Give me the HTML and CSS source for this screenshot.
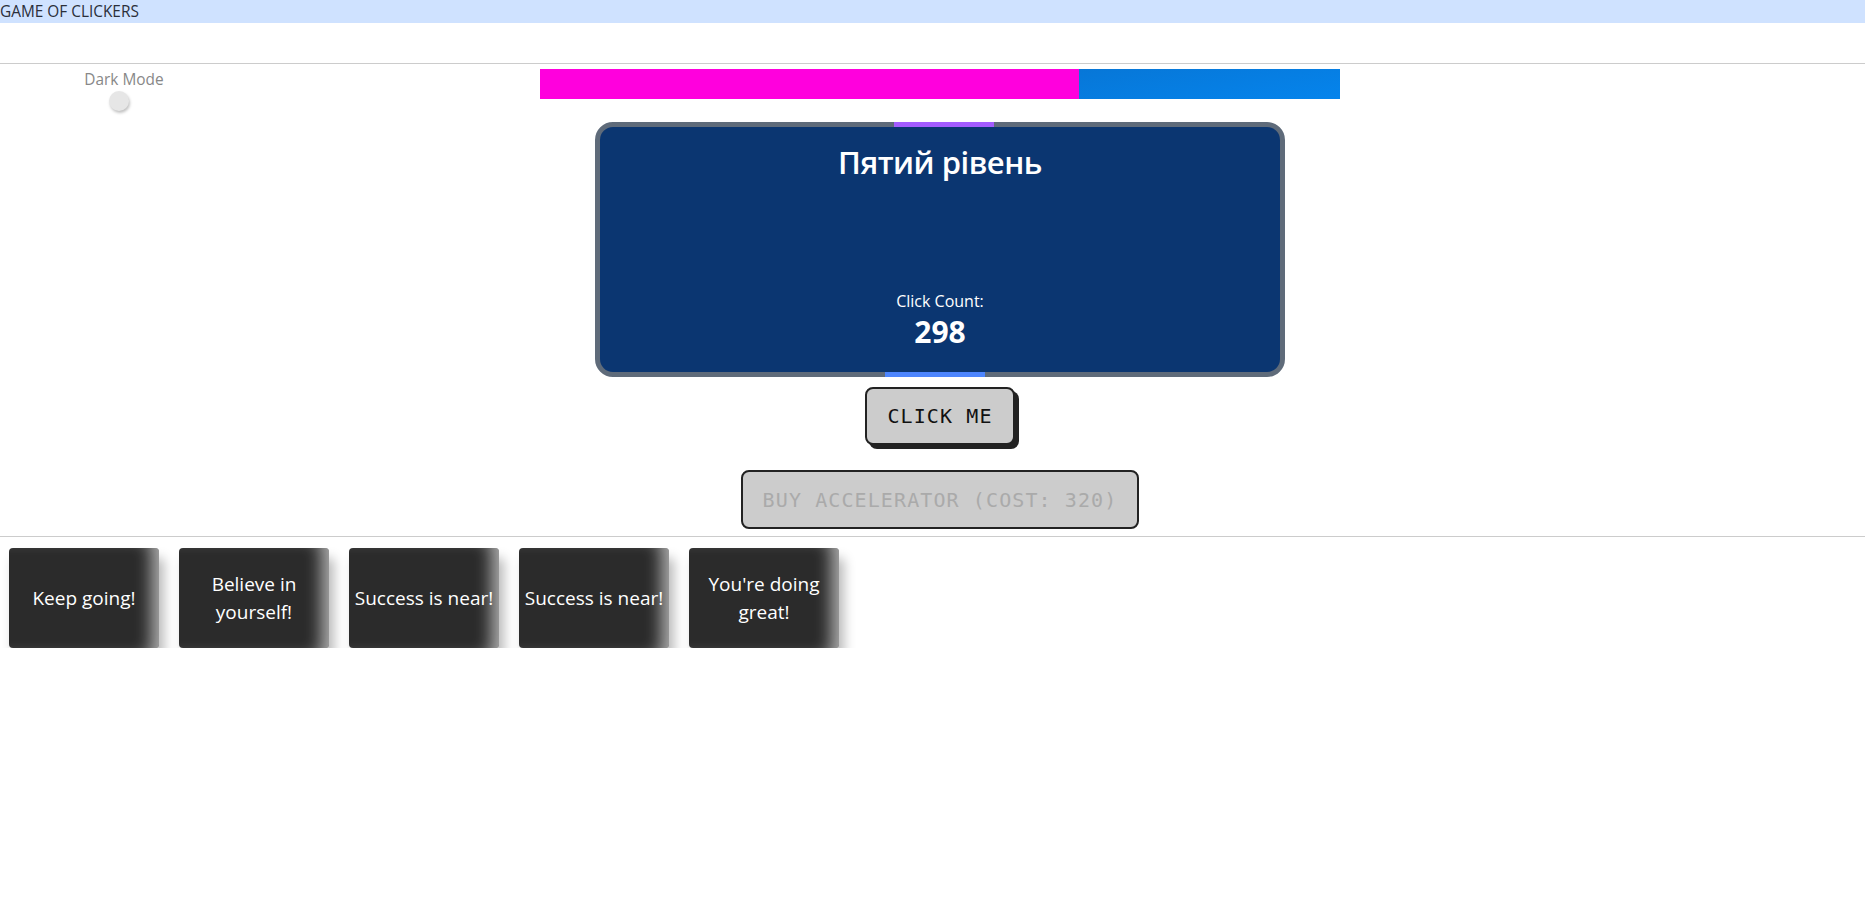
FILE: index.html
```html
<!DOCTYPE html>
<html lang="uk">
<head>
<meta charset="utf-8">
<title>Game of Clickers</title>
<link rel="stylesheet" href="styles.css">
</head>
<body>
<div class="topbar">GAME OF CLICKERS</div>
<div class="nav"></div>
<div class="layout">
  <aside class="side">
    <div class="dm-label">Dark Mode</div>
    <div class="switch"><span class="knob"></span></div>
  </aside>
  <main class="game">
    <div class="progress"><div class="progress-fill" style="width:67.4%"></div></div>
    <section class="level">
      <span class="accent accent-top"></span>
      <span class="accent accent-bottom"></span>
      <h2 class="level-title">Пятий рівень</h2>
      <div class="counter">
        <div class="counter-label">Click Count:</div>
        <div class="counter-value">298</div>
      </div>
    </section>
    <button class="btn btn-click">CLICK ME</button>
    <button class="btn btn-buy" disabled>BUY ACCELERATOR (COST: 320)</button>
  </main>
</div>
<div class="divider"></div>
<div class="cards">
  <div class="card">Keep going!</div>
  <div class="card">Believe in yourself!</div>
  <div class="card">Success is near!</div>
  <div class="card">Success is near!</div>
  <div class="card">You're doing great!</div>
</div>
</body>
</html>
```
FILE: styles.css
```css
* { box-sizing: border-box; }
body {
  margin: 0;
  font-family: "Segoe UI", "Open Sans", "Noto Sans", sans-serif;
  background: #fff;
}
.topbar {
  height: 23px;
  background: #cfe2ff;
  color: #2b2f3a;
  font-size: 15.4px;
  line-height: 23px;
}
.nav {
  height: 41px;
  border-bottom: 1px solid #cccccc;
}
.layout {
  display: flex;
  align-items: flex-start;
  padding-top: 6px;
}
.side {
  width: 248px;
  display: flex;
  flex-direction: column;
  align-items: center;
}
.dm-label {
  font-size: 15.4px;
  line-height: 20px;
  color: #888;
}
.switch {
  width: 30px;
  height: 20px;
  margin-top: 1px;
}
.knob {
  display: block;
  width: 20px;
  height: 20px;
  border-radius: 50%;
  background: #e6e6e6;
  box-shadow: 1px 2px 3px rgba(0,0,0,0.25);
}
.game {
  width: 800px;
  margin-left: 292px;
  margin-top: -1px;
  display: flex;
  flex-direction: column;
  align-items: center;
}
.progress {
  width: 800px;
  height: 30px;
  background: linear-gradient(170deg, #0a66bd 0%, #0584ec 100%);
}
.progress-fill {
  height: 100%;
  background: #ff00dd;
}
.level {
  position: relative;
  margin-top: 23px;
  width: 690px;
  height: 255px;
  background: #0b3671;
  border: 5px solid #5f6b7a;
  border-radius: 18px;
  color: #fff;
  display: flex;
  flex-direction: column;
  justify-content: space-between;
  align-items: center;
  padding: 15px 0 22px;
}
.accent {
  position: absolute;
  height: 5px;
  width: 100px;
}
.accent-top {
  top: -5px;
  left: 294px;
  background: #a35cff;
}
.accent-bottom {
  bottom: -5px;
  left: 285px;
  background: #4d86ff;
}
.level-title {
  margin: 0;
  font-size: 31px;
  line-height: 40px;
  font-weight: 600;
  letter-spacing: -0.5px;
}
.counter {
  text-align: center;
}
.counter-label {
  font-size: 16px;
  line-height: 20px;
}
.counter-value {
  font-size: 30px;
  line-height: 36px;
  font-weight: 700;
  margin-top: 3px;
}
.btn {
  font-family: "DejaVu Sans Mono", "Liberation Mono", monospace;
  font-size: 20px;
  letter-spacing: 1.1px;
  line-height: 30px;
  background: #cccccc;
  border: 2px solid #222;
  border-radius: 8px;
}
.btn-click {
  margin-top: 10px;
  padding: 12px 20px;
  color: #111;
  box-shadow: 4px 4px 0 #222;
}
.btn-buy {
  margin-top: 25px;
  padding: 13px 20px 12px;
  color: #aaaaaa;
}
.divider {
  margin-top: 7px;
  border-top: 1px solid #cccccc;
}
.cards {
  display: flex;
  gap: 20px;
  padding: 11px 0 0 9px;
}
.card {
  width: 150px;
  height: 100px;
  background: #2b2b2b;
  color: #fff;
  border-radius: 4px;
  font-size: 19px;
  line-height: 28px;
  display: flex;
  align-items: center;
  justify-content: center;
  text-align: center;
  padding: 0 3px;
  box-shadow: 5px 10px 12px rgba(0,0,0,0.28), inset -18px 0 16px -10px rgba(255,255,255,0.6);
}
```
